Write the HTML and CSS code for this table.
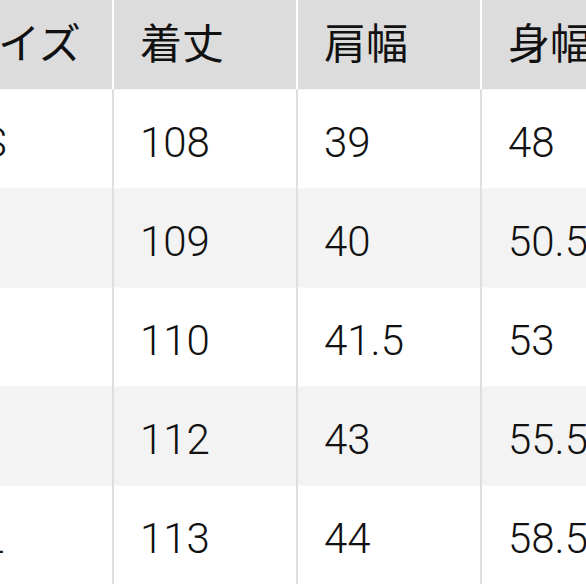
FILE: index.html
```html
<!DOCTYPE html>
<html lang="ja">
<head>
<meta charset="utf-8">
<link rel="stylesheet" href="styles.css">
</head>
<body>
<div class="frame">
  <table class="size-table">
    <colgroup>
      <col class="c"><col class="c"><col class="c"><col class="c">
    </colgroup>
    <thead>
      <tr><th>サイズ</th><th>着丈</th><th>肩幅</th><th>身幅</th></tr>
    </thead>
    <tbody>
      <tr><td>XS</td><td>108</td><td>39</td><td>48</td></tr>
      <tr class="alt"><td>S</td><td>109</td><td>40</td><td>50.5</td></tr>
      <tr><td>M</td><td>110</td><td>41.5</td><td>53</td></tr>
      <tr class="alt"><td>L</td><td>112</td><td>43</td><td>55.5</td></tr>
      <tr><td>XL</td><td>113</td><td>44</td><td>58.5</td></tr>
    </tbody>
  </table>
</div>
</body>
</html>
```
FILE: styles.css
```css
html, body {
  margin: 0;
  padding: 0;
  background: #ffffff;
}
.frame {
  width: 586px;
  height: 586px;
  overflow: hidden;
}
.size-table {
  margin-left: -72px;
  border-collapse: separate;
  border-spacing: 0;
  table-layout: fixed;
  width: 736px;
  font-family: Roboto, "Noto Sans CJK JP", sans-serif;
  font-size: 42px;
  color: #111111;
}
.size-table .c {
  width: 184px;
}
.size-table th {
  height: 89px;
  padding: 0 0 8px 26px;
  text-align: left;
  font-weight: 400;
  background: #dcdcdc;
  border-left: 2px solid #ffffff;
  box-sizing: border-box;
  vertical-align: middle;
}
.size-table td {
  height: 99px;
  padding: 6px 0 0 26px;
  text-align: left;
  font-weight: 300;
  background: #ffffff;
  border-left: 2px solid #dedede;
  border-top: 1px solid #f6f6f6;
  box-sizing: border-box;
  vertical-align: middle;
}
.size-table tr.alt td {
  background: #f3f3f3;
}
```
